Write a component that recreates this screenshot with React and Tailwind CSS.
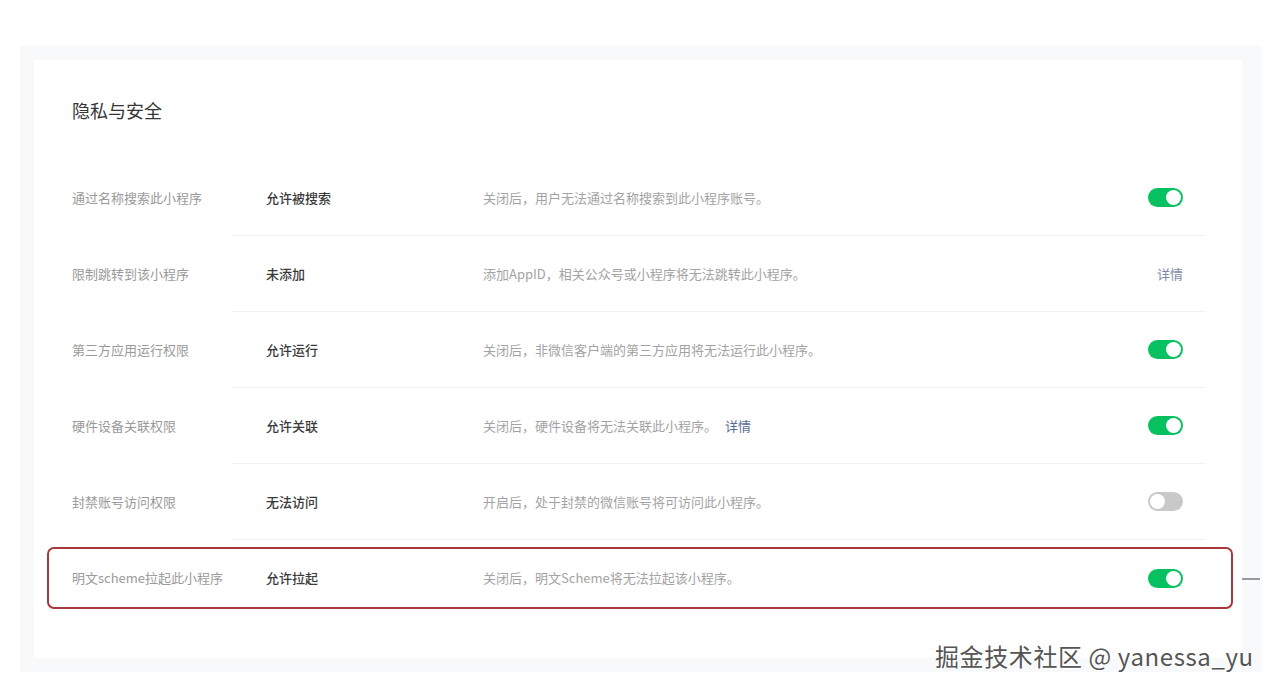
import { Fragment } from 'react';

const rows = [
  {
    label: '通过名称搜索此小程序',
    value: '允许被搜索',
    desc: '关闭后，用户无法通过名称搜索到此小程序账号。',
    action: 'on',
  },
  {
    label: '限制跳转到该小程序',
    value: '未添加',
    desc: '添加AppID，相关公众号或小程序将无法跳转此小程序。',
    action: 'link',
  },
  {
    label: '第三方应用运行权限',
    value: '允许运行',
    desc: '关闭后，非微信客户端的第三方应用将无法运行此小程序。',
    action: 'on',
  },
  {
    label: '硬件设备关联权限',
    value: '允许关联',
    desc: '关闭后，硬件设备将无法关联此小程序。',
    descLink: '详情',
    action: 'on',
  },
  {
    label: '封禁账号访问权限',
    value: '无法访问',
    desc: '开启后，处于封禁的微信账号将可访问此小程序。',
    action: 'off',
  },
];

const Toggle = ({ on }) => (
  <div
    className={`w-[35px] h-[19px] rounded-full p-[2px] flex items-center ${
      on ? 'bg-[#07c160] justify-end' : 'bg-[#c9c9c9] justify-start'
    }`}
  >
    <div className="w-[15px] h-[15px] rounded-full bg-white" />
  </div>
);

const RowContent = ({ row }) => (
  <>
    <div className="w-[194px] shrink-0 text-[13px] text-[#9a9a9a]">{row.label}</div>
    <div className="w-[217px] shrink-0 text-[13px] font-medium text-[#3a3a3a]">{row.value}</div>
    <div className="flex-1 text-[13px] text-[#a3a3a3]">
      {row.desc}
      {row.descLink && <span className="ml-[8px] text-[#576b95]">{row.descLink}</span>}
    </div>
    <div className="w-[60px] shrink-0 flex justify-end">
      {row.action === 'link' ? (
        <span className="text-[13px] text-[#7d8aa6]">详情</span>
      ) : (
        <Toggle on={row.action === 'on'} />
      )}
    </div>
  </>
);

export default function App() {
  return (
    <div
      className="relative w-[1280px] h-[691px] bg-white overflow-hidden"
      style={{ fontFamily: '"Noto Sans CJK SC", "Noto Sans", sans-serif' }}
    >
      <div className="ml-[20px] mt-[46px] w-[1242px] h-[626px] bg-[#f7f9fa] p-[14px] pr-[20px]">
        <div className="w-full h-full bg-white pl-[38px] pr-[37px] pt-[36px]">
          <h1 className="text-[18px] leading-[28px] text-[#353535]">隐私与安全</h1>
          <div className="mt-[36px] pr-[22px]">
            {rows.map((row) => (
              <Fragment key={row.label}>
                <div className="h-[75px] flex items-center">
                  <RowContent row={row} />
                </div>
                <div className="ml-[160px] -mr-[22px] h-px bg-[#f2f2f2]" />
              </Fragment>
            ))}
            <div className="pt-[7px]">
              <div className="relative -ml-[25px] -mr-[50px] h-[62px] pl-[23px] pr-[48px] flex items-center rounded-[7px] border-2 border-[#a8383c]">
                <RowContent
                  row={{
                    label: '明文scheme拉起此小程序',
                    value: '允许拉起',
                    desc: '关闭后，明文Scheme将无法拉起该小程序。',
                    action: 'on',
                  }}
                />
                <div className="absolute right-[-29px] top-[29px] w-[18px] h-[2px] bg-[#9a9a9a]" />
              </div>
            </div>
          </div>
        </div>
      </div>
      <div
        className="absolute left-[935px] top-[639px] text-[24px] leading-[34px] text-[#555555] tracking-[0.6px]"
        style={{ textShadow: '1px 1px 1px #ffffff, -1px -1px 1px #ffffff' }}
      >
        掘金技术社区 @ yanessa_yu
      </div>
    </div>
  );
}
